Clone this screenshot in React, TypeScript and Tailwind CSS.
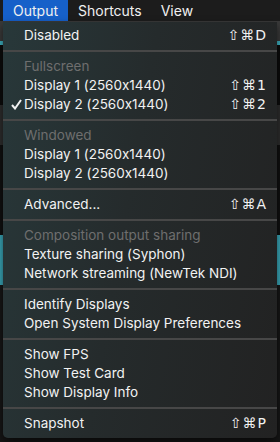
import { Fragment } from "react";

type Item =
  | { kind: "item"; label: string; shortcut?: string; checked?: boolean }
  | { kind: "header"; label: string }
  | { kind: "sep" };

const items: Item[] = [
  { kind: "item", label: "Disabled", shortcut: "⇧⌘D" },
  { kind: "sep" },
  { kind: "header", label: "Fullscreen" },
  { kind: "item", label: "Display 1 (2560x1440)", shortcut: "⇧⌘1" },
  { kind: "item", label: "Display 2 (2560x1440)", shortcut: "⇧⌘2", checked: true },
  { kind: "sep" },
  { kind: "header", label: "Windowed" },
  { kind: "item", label: "Display 1 (2560x1440)" },
  { kind: "item", label: "Display 2 (2560x1440)" },
  { kind: "sep" },
  { kind: "item", label: "Advanced...", shortcut: "⇧⌘A" },
  { kind: "sep" },
  { kind: "header", label: "Composition output sharing" },
  { kind: "item", label: "Texture sharing (Syphon)" },
  { kind: "item", label: "Network streaming (NewTek NDI)" },
  { kind: "sep" },
  { kind: "item", label: "Identify Displays" },
  { kind: "item", label: "Open System Display Preferences" },
  { kind: "sep" },
  { kind: "item", label: "Show FPS" },
  { kind: "item", label: "Show Test Card" },
  { kind: "item", label: "Show Display Info" },
  { kind: "sep" },
  { kind: "item", label: "Snapshot", shortcut: "⇧⌘P" },
];

const CheckIcon = () => (
  <svg width="11" height="11" viewBox="0 0 11 11" className="absolute left-[8px]">
    <path d="M1 6 L4 9.5 L10 1" fill="none" stroke="#f2f2f2" strokeWidth="2" />
  </svg>
);

const App = () => {
  return (
    <div
      className="relative flex h-[442px] w-[280px] flex-col overflow-hidden bg-[#141414] text-[13.5px] [font-feature-settings:'calt'_0]"
      style={{ fontFamily: "Inter, 'DejaVu Sans', sans-serif" }}
    >
      {/* menu bar */}
      <div className="flex h-[21px] items-center bg-[#1c1c1c] pl-[3px] text-[14px] text-[#f0f0f0]">
        <span className="flex h-full items-center bg-[#1660c9] px-[10px]">Output</span>
        <span className="px-[10px]">Shortcuts</span>
        <span className="px-[9px]">View</span>
      </div>

      {/* app content behind */}
      <div className="flex flex-1 flex-col">
        <div className="h-[20px] bg-[#3a3a3a]" />
        <div className="h-[4px] bg-[#3fb4c4]" />
        <div className="h-[60px] bg-[#0c0c0c]" />
        <div className="h-[40px] bg-[#2e2e2e]" />
        <div className="h-[90px] bg-[#101010]" />
        <div className="h-[50px] bg-[#3aa9ba]" />
        <div className="flex-1 bg-[#161616]" />
      </div>

      {/* dropdown */}
      <div className="absolute left-[3px] top-[22px] w-[274px] rounded-b-[5px] bg-[linear-gradient(100deg,#28383a_0%,#252b2c_45%,#222222_100%)] pb-[5px] pt-[4px] shadow-[0_4px_10px_rgba(0,0,0,0.6)]">
        {items.map((item, i) => (
          <Fragment key={i}>
            {item.kind === "sep" && (
              <div className="flex h-[12px] items-center">
                <div className="h-[2px] w-full bg-[#474747]" />
              </div>
            )}
            {item.kind === "header" && (
              <div className="flex h-[19px] items-center pl-[21px] text-[#6e6e6e]">
                {item.label}
              </div>
            )}
            {item.kind === "item" && (
              <div className="relative flex h-[19px] items-center justify-between pl-[21px] pr-[10px] text-[#f2f2f2]">
                {item.checked && <CheckIcon />}
                <span>{item.label}</span>
                {item.shortcut && (
                  <span
                    className="text-[14px] tracking-[1px]"
                    style={{ fontFamily: "'DejaVu Sans', sans-serif" }}
                  >
                    {item.shortcut}
                  </span>
                )}
              </div>
            )}
          </Fragment>
        ))}
      </div>
    </div>
  );
};

export default App;
